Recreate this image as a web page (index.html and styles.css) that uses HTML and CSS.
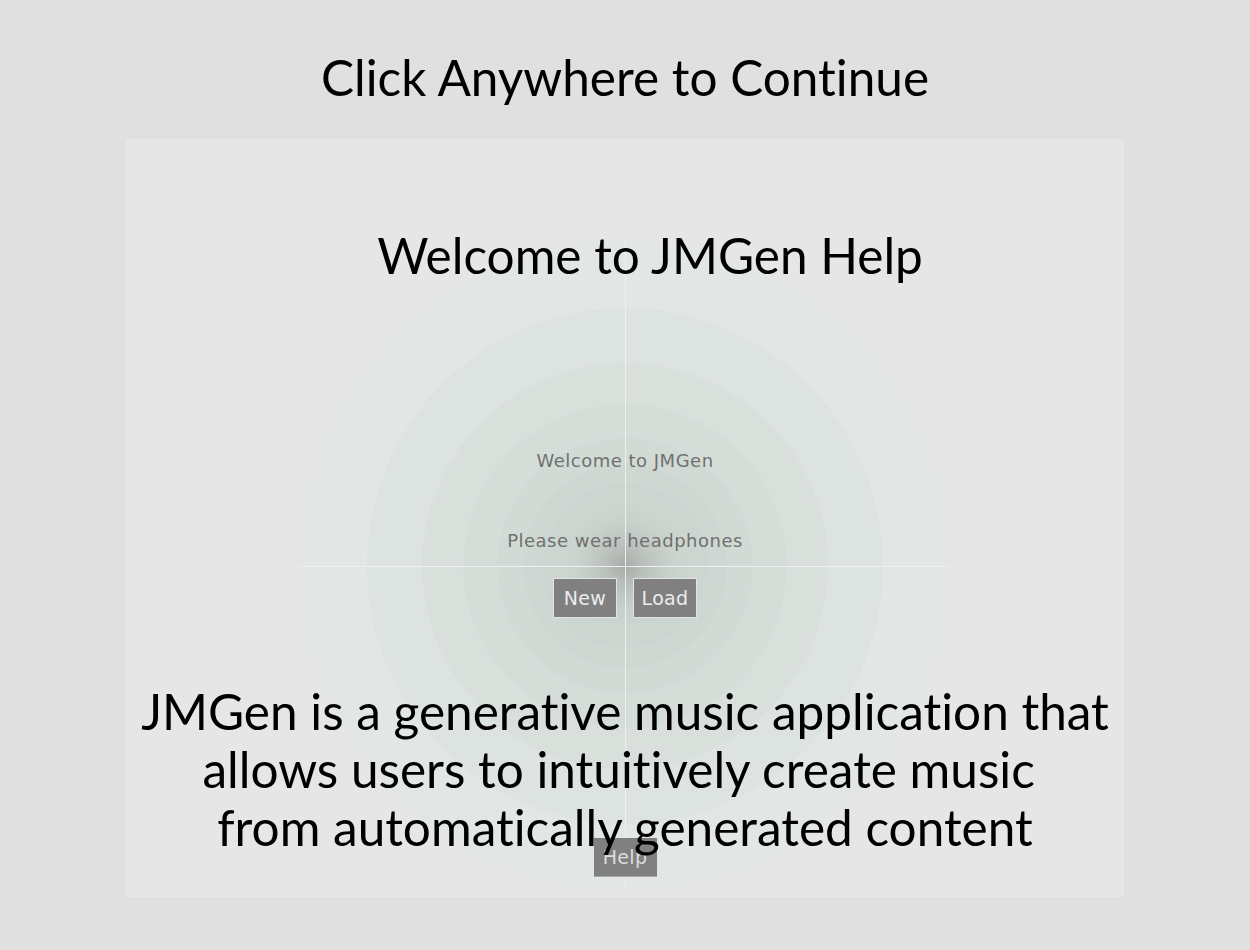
FILE: index.html
```html
<!DOCTYPE html>
<html lang="en">
<head>
<meta charset="utf-8">
<title>JMGen Help</title>
<link rel="stylesheet" href="styles.css">
</head>
<body>
<div class="screen">
  <h1 class="continue">Click Anywhere to Continue</h1>
  <div class="panel">
    <div class="app">
      <svg class="radar" width="650" height="650" viewBox="0 0 650 650">
        <defs>
          <radialGradient id="core" cx="0.5" cy="0.5" r="0.5">
            <stop offset="0" stop-color="#9fa39f" stop-opacity="0.85"/>
            <stop offset="0.35" stop-color="#aeb3af" stop-opacity="0.55"/>
            <stop offset="1" stop-color="#c8d0cc" stop-opacity="0"/>
          </radialGradient>
        </defs>
        <circle cx="325" cy="325" r="325" fill="#e2e6e4"/>
        <circle cx="325" cy="325" r="258" fill="#dde3e0"/>
        <circle cx="325" cy="325" r="203" fill="#d9e0dc"/>
        <circle cx="325" cy="325" r="162" fill="#d5ddd9"/>
        <circle cx="325" cy="325" r="128" fill="#d2dad6"/>
        <circle cx="325" cy="325" r="102" fill="#cfd7d3"/>
        <circle cx="325" cy="325" r="82" fill="#cdd5d1"/>
        <circle cx="325" cy="325" r="64" fill="url(#core)"/>
        <line x1="325.5" y1="0" x2="325.5" y2="650" stroke="#eef0ef" stroke-width="1"/>
        <line x1="0" y1="325.5" x2="650" y2="325.5" stroke="#eef0ef" stroke-width="1"/>
      </svg>
      <div class="app-content">
        <p class="app-text welcome">Welcome to JMGen</p>
        <p class="app-text headphones">Please wear headphones</p>
        <div class="app-buttons">
          <span class="app-btn">New</span>
          <span class="app-btn">Load</span>
        </div>
        <span class="app-btn help-btn">Help</span>
      </div>
    </div>
    <div class="help">
      <h2 class="help-title">Welcome to JMGen Help</h2>
      <p class="help-desc">JMGen is a generative music application that<br>allows users to intuitively create music&nbsp;<br>from automatically generated content</p>
    </div>
  </div>
</div>
</body>
</html>
```
FILE: styles.css
```css
* { box-sizing: border-box; }
html, body {
  margin: 0;
  padding: 0;
  width: 1250px;
  height: 950px;
  overflow: hidden;
  background: #e0e0e0;
}
.screen {
  display: flex;
  flex-direction: column;
  align-items: center;
  font-family: "Lato", "Liberation Sans", sans-serif;
  font-variant-ligatures: none;
  color: #000;
}
.continue {
  margin: 0;
  height: 139px;
  padding-top: 46px;
  font-size: 49.5px;
  font-weight: 400;
  line-height: 62px;
  text-align: center;
  white-space: nowrap;
}
.panel {
  position: relative;
  width: 998px;
  height: 758px;
  background: #e6e6e6;
}
.app {
  position: absolute;
  inset: 0;
}
.radar {
  position: absolute;
  left: 174px;
  top: 102px;
  display: block;
}
.app-content {
  position: relative;
  display: flex;
  flex-direction: column;
  align-items: center;
  padding-top: 309px;
  font-family: "DejaVu Sans", sans-serif;
}
.app-text {
  margin: 0;
  font-size: 18px;
  line-height: 26px;
  color: #6f716f;
  letter-spacing: 0.5px;
}
.headphones {
  margin-top: 54px;
}
.app-buttons {
  display: flex;
  gap: 16px;
  margin-top: 24px;
}
.app-btn {
  display: flex;
  align-items: center;
  justify-content: center;
  width: 64px;
  height: 40px;
  background: #808080;
  border: 1px solid #e2e4e3;
  color: #ececec;
  font-size: 19px;
  letter-spacing: 0.3px;
}
.help-btn {
  margin-top: 220px;
  width: 63px;
  height: 39px;
  border: none;
  border-bottom: 1px solid #a5a8a6;
  color: #dcdcdc;
}
.help {
  position: relative;
  display: flex;
  flex-direction: column;
  align-items: center;
}
.help-title {
  margin: 0;
  padding-top: 85px;
  padding-left: 50px;
  font-size: 49.5px;
  font-weight: 400;
  line-height: 62px;
  white-space: nowrap;
}
.help-desc {
  margin: 396px 0 0;
  font-size: 49.5px;
  line-height: 58px;
  text-align: center;
  white-space: nowrap;
}
```
